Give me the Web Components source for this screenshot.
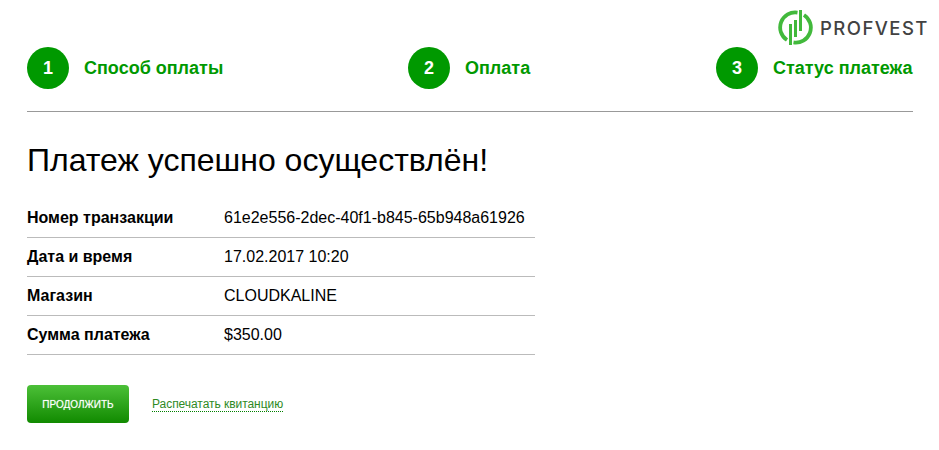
<!DOCTYPE html>
<html lang="ru">
<head>
<meta charset="utf-8">
<title>Платеж</title>
<style>
html, body { margin: 0; padding: 0; background: #fff; }
body { font-family: "Liberation Sans", Arial, sans-serif; }
</style>
</head>
<body>
<payment-page>
    <pay-steps>
        <pay-step num="1">Способ оплаты</pay-step>
        <pay-step num="2">Оплата</pay-step>
        <pay-step num="3">Статус платежа</pay-step>
    </pay-steps>
    <h-title slot="title">Платеж успешно осуществлён!</h-title>
    <info-table slot="table">
        <info-row label="Номер транзакции">61e2e556-2dec-40f1-b845-65b948a61926</info-row>
        <info-row label="Дата и время">17.02.2017 10:20</info-row>
        <info-row label="Магазин">CLOUDKALINE</info-row>
        <info-row label="Сумма платежа">$350.00</info-row>
    </info-table>
    <pay-actions slot="actions"></pay-actions>
</payment-page>
<script>
class PaymentPage extends HTMLElement {
    constructor() {
        super();
        this.attachShadow({ mode: "open" });
        this.shadowRoot.innerHTML = `
        <style>
        :host {
            display: block;
            position: relative;
            height: 450px;
            padding: 47px 26px 0 27px;
            box-sizing: border-box;
            overflow: hidden;
        }
        .logo {
            position: absolute;
            top: 9px;
            left: 778px;
            display: flex;
            align-items: center;
            gap: 7px;
        }
        .logo span {
            font: 500 18.5px Inter, sans-serif;
            color: #424242;
            letter-spacing: 1.45px;
        }
        </style>
        <div class="logo">
            <svg width="35" height="37" viewBox="0 0 35 37" fill="none" stroke="#42b93c" stroke-width="3.800">
                <path d="M19.500 3.600A15 15 0 0 0 9 31"/>
                <path d="M15.500 33.400A15 15 0 0 0 26 6"/>
                <path d="M22.500 1v21" stroke-width="3"/>
                <path d="M12.500 36V15" stroke-width="3"/>
                <path d="M17.500 11v17" stroke-width="3"/>
            </svg>
            <span>PROFVEST</span>
        </div>
        <slot></slot>
        <slot name="title"></slot>
        <slot name="table"></slot>
        <slot name="actions"></slot>
        `;
    }
}

class PaySteps extends HTMLElement {
    constructor() {
        super();
        this.attachShadow({ mode: "open" });
        this.shadowRoot.innerHTML = `
        <style>
        :host {
            display: grid;
            grid-template-columns: 381px 308px 1fr;
            height: 64px;
            border-bottom: 1px solid #999;
        }
        </style>
        <slot></slot>
        `;
    }
}

class PayStep extends HTMLElement {
    constructor() {
        super();
        this.attachShadow({ mode: "open" });
    }

    connectedCallback() {
        this.shadowRoot.innerHTML = `
        <style>
        :host {
            display: flex;
            align-items: flex-start;
            gap: 15px;
            font-size: 18px;
            font-weight: bold;
            color: #009900;
        }
        .num {
            width: 42px;
            height: 42px;
            border-radius: 50%;
            background: #009900;
            color: #fff;
            display: flex;
            align-items: center;
            justify-content: center;
        }
        .label {
            line-height: 42px;
        }
        </style>
        <span class="num">${this.getAttribute("num")}</span>
        <span class="label"><slot></slot></span>
        `;
    }
}

class HTitle extends HTMLElement {
    constructor() {
        super();
        this.attachShadow({ mode: "open" });
        this.shadowRoot.innerHTML = `
        <style>
        :host {
            display: block;
            margin-top: 28px;
            font-size: 32px;
            line-height: 40px;
            color: #000;
        }
        </style>
        <slot></slot>
        `;
    }
}

class InfoTable extends HTMLElement {
    constructor() {
        super();
        this.attachShadow({ mode: "open" });
        this.shadowRoot.innerHTML = `
        <style>
        :host {
            display: block;
            width: 508px;
            margin-top: 19px;
        }
        </style>
        <slot></slot>
        `;
    }
}

class InfoRow extends HTMLElement {
    constructor() {
        super();
        this.attachShadow({ mode: "open" });
    }

    connectedCallback() {
        this.shadowRoot.innerHTML = `
        <style>
        :host {
            display: grid;
            grid-template-columns: 197px 1fr;
            height: 38px;
            line-height: 38px;
            border-bottom: 1px solid #bbb;
            font-size: 16px;
            color: #000;
        }
        .label {
            font-weight: bold;
        }
        </style>
        <span class="label">${this.getAttribute("label")}</span>
        <span><slot></slot></span>
        `;
    }
}

class PayActions extends HTMLElement {
    constructor() {
        super();
        this.attachShadow({ mode: "open" });
        this.shadowRoot.innerHTML = `
        <style>
        :host {
            display: flex;
            align-items: center;
            gap: 23px;
            margin-top: 30px;
        }
        .btn {
            width: 102px;
            height: 38px;
            box-sizing: border-box;
            border: none;
            padding: 0;
            border-radius: 4px;
            background: linear-gradient(#4cc038, #118a00);
            color: #fff;
            font: 10px "Liberation Sans", Arial, sans-serif;
            text-transform: uppercase;
            text-shadow: 0 0 1px rgba(255, 255, 255, 0.6);
        }
        .print {
            font-size: 12px;
            letter-spacing: -0.05px;
            color: #2f8a1f;
            text-decoration: none;
            border-bottom: 1px dotted #008000;
        }
        </style>
        <button class="btn" type="button">Продолжить</button>
        <a class="print" href="#">Распечатать квитанцию</a>
        `;
    }
}

customElements.define("payment-page", PaymentPage);
customElements.define("pay-steps", PaySteps);
customElements.define("pay-step", PayStep);
customElements.define("h-title", HTitle);
customElements.define("info-table", InfoTable);
customElements.define("info-row", InfoRow);
customElements.define("pay-actions", PayActions);
</script>
</body>
</html>
